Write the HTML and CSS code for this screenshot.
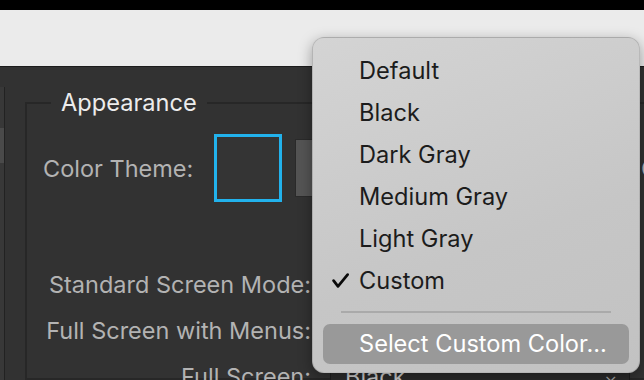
FILE: index.html
```html
<!DOCTYPE html>
<html>

<head>
    <meta charset="utf-8">
    <title>Preferences - Interface</title>
    <link rel="stylesheet" href="styles.css">
</head>

<body>
    <div class="topbar"></div>
    <div class="toolbar"></div>

    <div class="panel">
        <div class="sidebar">
            <div class="sidebar-sel"></div>
        </div>

        <fieldset class="group">
            <legend>Appearance</legend>

            <div class="theme-row">
                <span class="theme-label">Color Theme:</span>
                <div class="swatch active"></div>
                <div class="swatch gray"></div>
                <span class="theme-more">Color</span>
            </div>

            <!-- the first two selects sit under the open menu -->
            <div class="modes">
                <span class="mode-label">Standard Screen Mode:</span>
                <div class="select"></div>
                <span class="mode-label">Full Screen with Menus:</span>
                <div class="select"></div>
                <span class="mode-label">Full Screen:</span>
                <div class="select">Black<span class="chev">&#8964;</span></div>
            </div>
        </fieldset>
    </div>

    <!-- popup menu of the color select -->
    <div class="menu">
        <div class="item">Default</div>
        <div class="item">Black</div>
        <div class="item">Dark Gray</div>
        <div class="item">Medium Gray</div>
        <div class="item">Light Gray</div>
        <div class="item checked">
            <svg class="check" width="17" height="15" viewBox="0 0 17 15">
                <polyline points="1.6,7.6 6,13.4 15.6,1.6" fill="none" stroke="#0a0a0a" stroke-width="2.7" stroke-linecap="round" stroke-linejoin="round" />
            </svg>
            Custom
        </div>
        <div class="sep"></div>
        <div class="item hot">Select Custom Color...</div>
    </div>
</body>

</html>
```

FILE: styles.css
```css
body {
    margin: 0;
    width: 644px;
    height: 380px;
    overflow: hidden;
    font-family: Inter, "Noto Sans", sans-serif;
    background-color: #323232;
    position: relative;
}

.topbar {
    height: 10px;
    background-color: #000;
}

.toolbar {
    height: 56px;
    background-color: #ebebeb;
}

.panel {
    display: flex;
    height: 313px;
    border-top: 1px solid #1c1c1c;
    background-color: #323232;
    overflow: hidden;
}

.sidebar {
    width: 4px;
    margin-top: 20px;
    background-color: #383838;
    border-right: 1px solid #222;
    flex-shrink: 0;
}

.sidebar-sel {
    margin-top: 41px;
    height: 35px;
    background-color: #4a4a4a;
}

.group {
    margin: 23px 0 0 20px;
    padding: 0;
    width: 700px;
    flex-shrink: 0;
    border: 2px solid #272727;
    min-inline-size: 0;
}

.group legend {
    margin-left: 24px;
    padding: 0 10px;
    line-height: 26px;
    font-size: 23.6px;
    color: #ececec;
}

.theme-row {
    display: flex;
    align-items: center;
    margin-top: 18px;
    height: 68px;
    padding-left: 16px;
}

.theme-label {
    width: 171px;
    flex-shrink: 0;
    font-size: 23.5px;
    color: #b3b3b3;
}

.swatch {
    flex-shrink: 0;
    box-sizing: border-box;
}

.swatch.active {
    width: 68px;
    height: 68px;
    border: 3px solid #22b2ec;
    background-color: #343434;
}

.swatch.gray {
    width: 58px;
    height: 58px;
    margin-left: 13px;
    border: 1px solid #2a2a2a;
    background-color: #545454;
}

.theme-more {
    margin-left: 288px;
    font-size: 23.5px;
    color: #b3b3b3;
}

.modes {
    display: grid;
    grid-template-columns: 284px 300px;
    grid-auto-rows: 46px;
    column-gap: 19px;
    align-items: center;
    margin-top: 59px;
}

.mode-label {
    text-align: right;
    font-size: 23.5px;
    color: #b3b3b3;
    white-space: nowrap;
}

.select {
    display: flex;
    align-items: center;
    justify-content: space-between;
    height: 34px;
    padding: 0 12px 0 14px;
    border: 1px solid #1e1e1e;
    background-color: #2b2b2b;
    font-size: 23.5px;
    color: #cfcfcf;
}

.chev {
    font-size: 16px;
    color: #aaa;
}

.menu {
    position: absolute;
    left: 312px;
    top: 37px;
    width: 328px;
    height: 336px;
    box-sizing: border-box;
    padding: 12px 10px 10px 10px;
    border-radius: 12px;
    border: 1px solid rgba(0, 0, 0, 0.12);
    background: linear-gradient(160deg, #d4d4d4, #c6c6c6 60%, #c2c2c2);
    box-shadow: 0 4px 14px rgba(0, 0, 0, 0.35);
}

.item {
    position: relative;
    height: 42px;
    line-height: 42px;
    padding-left: 36px;
    font-size: 23.6px;
    color: #1c1c1c;
    white-space: nowrap;
}

.check {
    position: absolute;
    left: 9px;
    top: 13px;
}

.sep {
    height: 22px;
    margin: 0 18px;
    background: linear-gradient(#0000 9px, #aaa 9px, #aaa 11px, #0000 11px);
}

.item.hot {
    height: 40px;
    line-height: 40px;
    border-radius: 7px;
    background-color: #999;
    color: #fff;
}
```
